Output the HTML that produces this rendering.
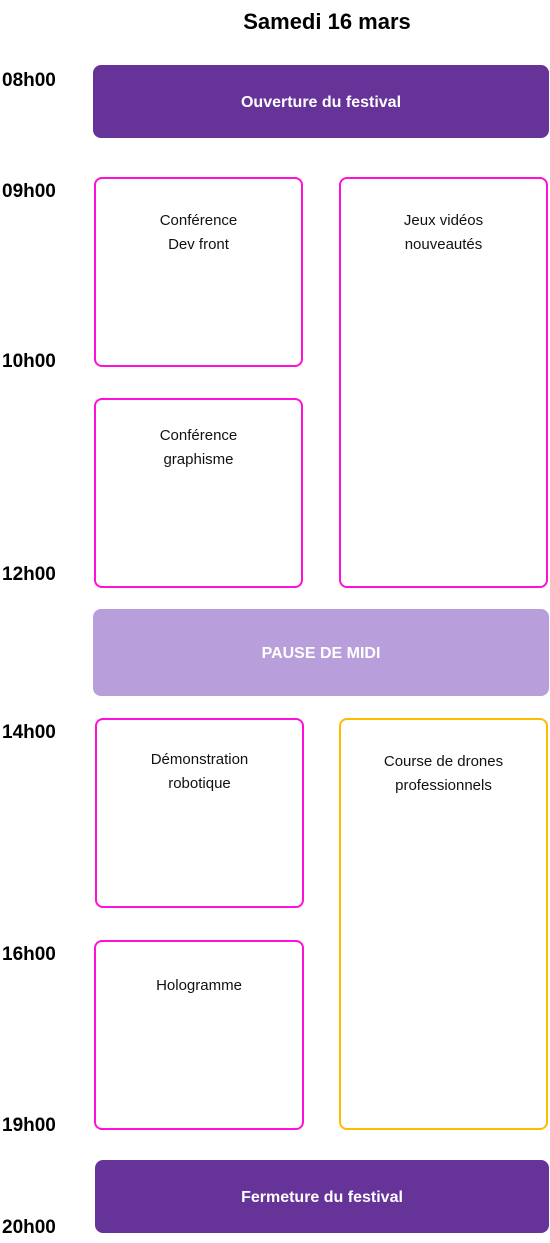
<!DOCTYPE html>
<html><head><meta charset="utf-8"><style>
body{margin:0;width:550px;height:1243px;background:#fff;position:relative;font-family:"Liberation Sans",sans-serif;overflow:hidden}
.a{position:absolute;box-sizing:border-box}
.t{font-weight:bold;font-size:19px;color:#000;left:2px;line-height:22px}
.f{border-radius:8px;color:#fff;font-weight:bold;font-size:16px;display:flex;align-items:center;justify-content:center}
.b{border:2px solid #ff10d8;border-radius:8px;text-align:center;font-size:15px;line-height:24px;padding-top:30px;color:#111}
</style></head><body>
<div class="a" style="left:100px;width:454px;top:7px;text-align:center;font-weight:bold;font-size:22px;line-height:30px">Samedi 16 mars</div>
<div class="a t" style="top:70px">08h00</div>
<div class="a t" style="top:181px">09h00</div>
<div class="a t" style="top:351px">10h00</div>
<div class="a t" style="top:564px">12h00</div>
<div class="a t" style="top:722px">14h00</div>
<div class="a t" style="top:944px">16h00</div>
<div class="a t" style="top:1115px">19h00</div>
<div class="a t" style="top:1217px">20h00</div>
<div class="a f" style="left:93px;top:65px;width:456px;height:73px;background:#663399;padding-top:3px">Ouverture du festival</div>
<div class="a b" style="left:94px;top:177px;width:209px;height:190px">Conférence<br>Dev front</div>
<div class="a b" style="left:339px;top:177px;width:209px;height:411px">Jeux vidéos<br>nouveautés</div>
<div class="a b" style="left:94px;top:398px;width:209px;height:190px;padding-top:24px">Conférence<br>graphisme</div>
<div class="a f" style="left:93px;top:609px;width:456px;height:87px;background:#b89edb;padding-top:3px">PAUSE DE MIDI</div>
<div class="a b" style="left:95px;top:718px;width:209px;height:190px;padding-top:28px">Démonstration<br>robotique</div>
<div class="a b" style="left:339px;top:718px;width:209px;height:412px;border-color:#ffbb00;padding-top:30px">Course de drones<br>professionnels</div>
<div class="a b" style="left:94px;top:940px;width:210px;height:190px;padding-top:32px">Hologramme</div>
<div class="a f" style="left:95px;top:1160px;width:454px;height:73px;background:#663399;padding-top:3px">Fermeture du festival</div>
</body></html>
